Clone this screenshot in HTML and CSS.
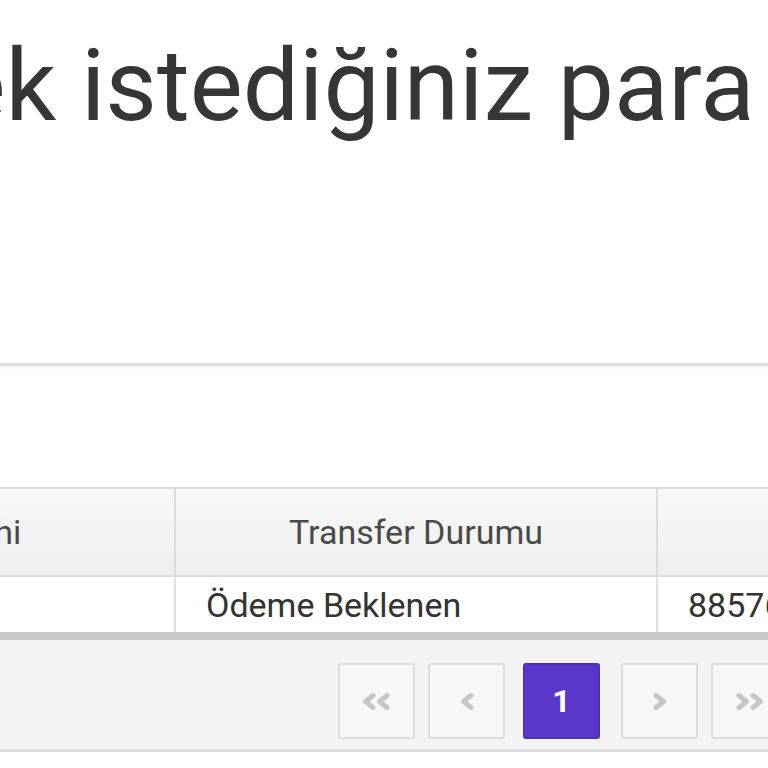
FILE: index.html
```html
<!DOCTYPE html>
<html lang="tr">
<head>
    <meta charset="UTF-8">
    <meta name="viewport" content="width=device-width, initial-scale=1.0">
    <title>Para Transferi</title>
    <link rel="stylesheet" href="styles.css">
</head>
<body>
    <div class="page">
        <div class="page-head">
            <h1 class="page-title">Çekmek istediğiniz para tutarını seçin</h1>
        </div>

        <div class="grid">
            <table class="grid-table">
                <colgroup>
                    <col class="col-date">
                    <col class="col-status">
                    <col class="col-ref">
                </colgroup>
                <thead>
                    <tr>
                        <th>İşlem Tarihi</th>
                        <th>Transfer Durumu</th>
                        <th>Referans No</th>
                    </tr>
                </thead>
                <tbody>
                    <tr>
                        <td>12.03.2021</td>
                        <td>Ödeme Beklenen</td>
                        <td>88576214</td>
                    </tr>
                </tbody>
            </table>

            <div class="pager">
                <button class="pager-btn" title="İlk">
                    <svg width="31" height="17" viewBox="0 0 31 17"><polyline points="12,2.5 4.5,8.5 12,14.5"/><polyline points="26,2.5 18.5,8.5 26,14.5"/></svg>
                </button>
                <button class="pager-btn" title="Önceki">
                    <svg width="14" height="17" viewBox="0 0 14 17"><polyline points="11,2.5 3.5,8.5 11,14.5"/></svg>
                </button>
                <button class="pager-btn active">1</button>
                <button class="pager-btn" title="Sonraki">
                    <svg width="14" height="17" viewBox="0 0 14 17"><polyline points="3,2.5 10.5,8.5 3,14.5"/></svg>
                </button>
                <button class="pager-btn" title="Son">
                    <svg width="31" height="17" viewBox="0 0 31 17"><polyline points="5,2.5 12.5,8.5 5,14.5"/><polyline points="19,2.5 26.5,8.5 19,14.5"/></svg>
                </button>
            </div>
        </div>
    </div>
</body>
</html>
```

FILE: styles.css
```css
html, body { margin: 0; padding: 0; background: #fff; }
body { font-family: Roboto, "Liberation Sans", sans-serif; color: #333; overflow: hidden; width: 768px; height: 768px; }

.page-head { height: 363px; border-bottom: 3px solid #e0e0e0; box-shadow: 0 1px 3px rgba(0, 0, 0, 0.06); overflow: hidden; }
.page-title { margin: 26px 0 0 -304px; font-size: 100px; font-weight: 400; line-height: 1.2; color: #363636; white-space: nowrap; }

.grid { margin: 121px 0 0 -306px; width: 1526px; }
.grid-table { border-collapse: collapse; table-layout: fixed; width: 1526px; border-top: 2px solid #dcdcdc; border-bottom: 8px solid #c9c9c9; }
.col-date { width: 481px; }
.col-status { width: 482px; }
.grid-table th { height: 86px; padding: 0; font-size: 34px; font-weight: 400; color: #4a4a4a; text-align: center; background: linear-gradient(#f8f8f8, #efefef); border-right: 2px solid #dcdcdc; border-bottom: 2px solid #dcdcdc; }
.grid-table td { height: 55px; padding: 0 0 0 30px; font-size: 34px; color: #333; background: #fff; border-right: 2px solid #e2e2e2; white-space: nowrap; }

.pager { display: flex; align-items: flex-start; box-sizing: border-box; height: 112px; padding: 23px 0 0 644px; background: #f4f4f4; border-bottom: 3px solid #dedede; }
.pager-btn { display: flex; align-items: center; justify-content: center; box-sizing: border-box; width: 77px; height: 76px; margin-right: 13px; padding: 0; background: #f7f7f7; border: 2px solid #dddddd; border-radius: 3px; color: #c6c6c6; }
.pager-btn svg { fill: none; stroke: currentColor; stroke-width: 5; stroke-linecap: round; stroke-linejoin: round; }
.pager-btn.active { margin: 0 21px 0 5px; background: #5a37ca; border-color: #4e2fb5; color: #fff; font-family: Roboto, sans-serif; font-size: 32px; font-weight: bold; }
```
